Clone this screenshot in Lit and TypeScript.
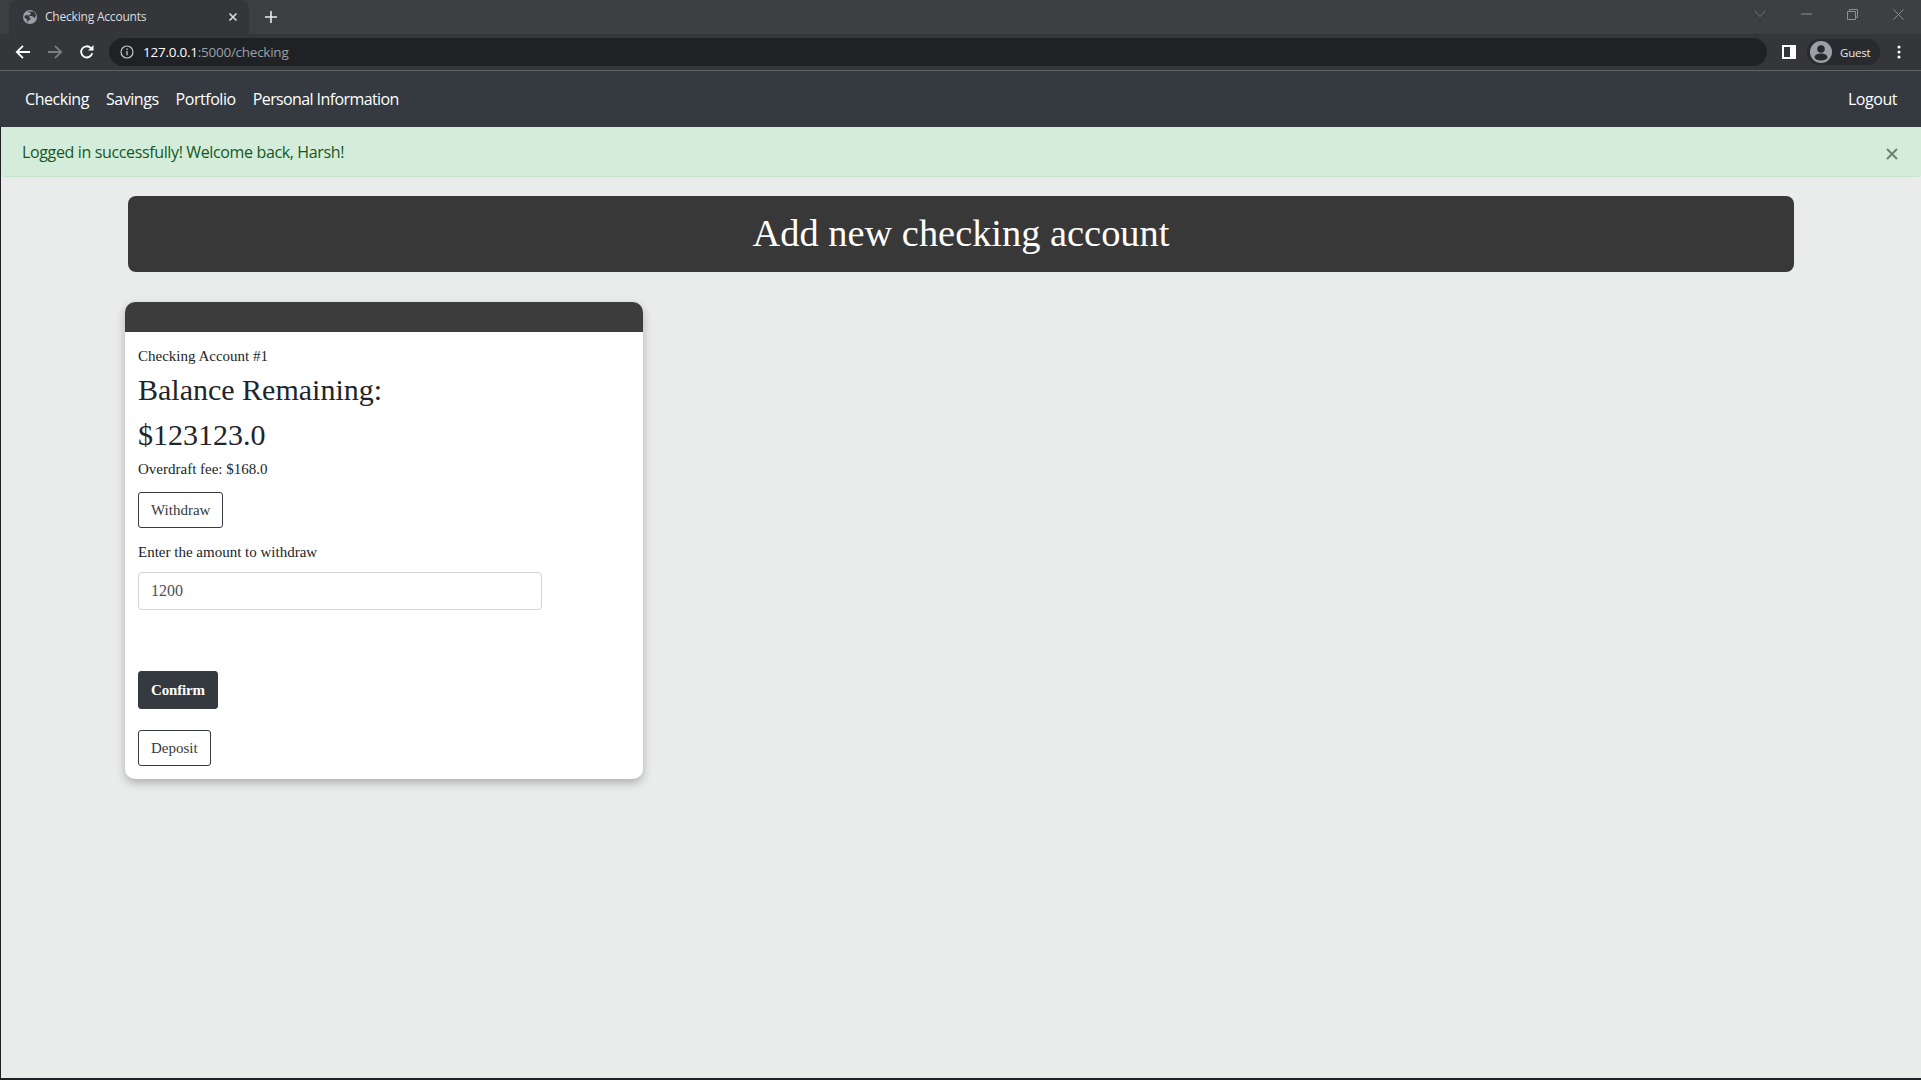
import { LitElement, html, css } from "lit";
import { customElement } from "lit/decorators.js";

@customElement("app-root")
export class AppRoot extends LitElement {
  static styles = css`
    :host { display: flex; flex-direction: column; height: 1080px; width: 1921px; overflow: hidden; background: #202124; font-family: "Liberation Serif", serif; }
    * { box-sizing: border-box; }
    svg { display: block; flex: none; }
    .ui { font-family: "Open Sans", "Noto Sans", sans-serif; }
    .strip { height: 34px; flex: none; background: #3c4043; display: flex; align-items: flex-end; padding-left: 9px; }
    .tab { width: 240px; height: 34px; background: #35363a; border-radius: 8px 8px 0 0; display: flex; align-items: center; padding: 0 11px 0 13px; color: #dcdde0; font-size: 12px; }
    .tab span { margin-left: 7px; flex: 1; letter-spacing: -0.2px; padding-bottom: 2px; }
    .plus { margin-left: 16px; align-self: center; }
    .winctl { margin-left: auto; display: flex; align-items: center; align-self: center; gap: 35px; padding-right: 17px; margin-top: -6px; }
    .toolbar { height: 36px; flex: none; background: #35363a; display: flex; align-items: center; padding-left: 15px; }
    .toolbar .nav { display: flex; gap: 16px; align-items: center; }
    .omni { margin-left: 14px; flex: 1; height: 28px; background: #202124; border-radius: 14px; display: flex; align-items: center; padding-left: 11px; font-size: 13.5px; color: #9aa0a6; }
    .omni b { font-weight: 400; color: #fff; margin-left: 9px; letter-spacing: -0.25px; }
    .omni i { font-style: normal; letter-spacing: -0.25px; }
    .tools { display: flex; align-items: center; padding-left: 15px; padding-right: 20px; }
    .guest { margin-left: 11px; margin-right: 17px; width: 73px; height: 26px; border-radius: 13px; background: #292a2d; display: flex; align-items: center; padding-left: 3px; color: #e8eaed; font-size: 11.5px; gap: 8px; letter-spacing: -0.2px; }
    .divider { height: 1px; flex: none; background: #5f6368; }
    .page { flex: 1; margin-left: 1px; margin-bottom: 2px; background: #eaeceb; display: flex; flex-direction: column; min-height: 0; }
    .navbar { height: 56px; flex: none; background: #343a40; margin-left: -1px; display: flex; align-items: center; padding: 0 24px 0 25px; gap: 17px; font-size: 16px; color: #fff; letter-spacing: -0.45px; }
    .navbar .long { letter-spacing: -0.6px; }
    .navbar .logout { margin-left: auto; }
    .alert { height: 50px; flex: none; background: #d4edda; border-bottom: 1px solid #c3e6cb; border-radius: 0 0 4px 4px; display: flex; align-items: center; justify-content: space-between; padding: 0 23px 0 21px; color: #155724; font-size: 16px; letter-spacing: -0.36px; }
    .alert svg { margin-top: 5px; }
    .content { padding: 19px 0 0 124px; }
    .title { width: 1666px; height: 76px; margin-left: 3px; background: #383838; border-radius: 8px; color: #fff; font-size: 38.4px; display: flex; align-items: center; justify-content: center; padding-bottom: 2px; }
    .card { margin-top: 30px; width: 518px; background: #fff; border-radius: 10px; overflow: hidden; box-shadow: 0 4px 10px rgba(0,0,0,.25); display: flex; flex-direction: column; }
    .card-head { height: 30px; background: #3c3c3c; flex: none; }
    .card-body { padding: 14px 13px 13px; display: flex; flex-direction: column; align-items: flex-start; color: #212529; }
    .small { font-size: 15px; line-height: 21px; }
    .big { font-size: 30px; line-height: 34px; margin-top: 6px; }
    .big.amount { margin-top: 11px; }
    .fee { margin-top: 7px; }
    .btn { font: inherit; font-size: 15px; height: 36px; padding: 0 12px; background: #fff; color: #343a40; border: 1px solid #343a40; border-radius: 3px; display: flex; align-items: center; }
    .btn.withdraw { margin-top: 12px; }
    .label { margin-top: 14px; }
    .input { margin-top: 9px; width: 404px; height: 38px; border: 1px solid #ced4da; border-radius: 4px; padding: 0 12px; display: flex; align-items: center; font-size: 16px; color: #495057; }
    .btn.confirm { margin-top: 61px; height: 38px; background: #343a40; color: #fff; font-weight: 700; letter-spacing: -0.15px; }
    .btn.deposit { margin-top: 21px; }
  `;

  render() {
    return html`
      <div class="strip ui">
        <div class="tab">
          <svg width="16" height="16" viewBox="0 0 16 16"><circle cx="8" cy="8" r="7" fill="#9aa0a6"/><path d="M5 2.5 9 4 7.5 6.5 4 6 2 8l3 2.5.5 3L7 11l2-1-2.5-2.5L10 7l3 2 1-3-2-3.5z" fill="#35363a"/></svg>
          <span>Checking Accounts</span>
          <svg width="10" height="10" viewBox="0 0 10 10"><path d="M1.5 1.5l7 7M8.5 1.5l-7 7" stroke="#dcdde0" stroke-width="1.6"/></svg>
        </div>
        <svg class="plus" width="12" height="12" viewBox="0 0 12 12"><path d="M6 0v12M0 6h12" stroke="#e8eaed" stroke-width="1.6"/></svg>
        <div class="winctl">
          <svg width="12" height="8" viewBox="0 0 12 8"><path d="M1 1l5 5.5L11 1" fill="none" stroke="#70757a" stroke-width="1"/></svg>
          <svg width="11" height="2" viewBox="0 0 11 2"><path d="M0 1h11" stroke="#8b8f93" stroke-width="1"/></svg>
          <svg width="11" height="11" viewBox="0 0 11 11"><path d="M.5 2.5h8v8h-8zM2.5 2.5v-2h8v8h-2" fill="none" stroke="#8b8f93" stroke-width="1"/></svg>
          <svg width="11" height="11" viewBox="0 0 11 11"><path d="M.5.5l10 10M10.5.5l-10 10" stroke="#8b8f93" stroke-width="1"/></svg>
        </div>
      </div>
      <div class="toolbar ui">
        <div class="nav">
          <svg width="16" height="16" viewBox="0 0 16 16"><path d="M15 8H2M8 1.8 1.8 8 8 14.2" fill="none" stroke="#fff" stroke-width="1.8"/></svg>
          <svg width="16" height="16" viewBox="0 0 16 16"><path d="M1 8h13M8 1.8 14.2 8 8 14.2" fill="none" stroke="#7b7e81" stroke-width="1.8"/></svg>
          <svg width="16" height="16" viewBox="0 0 16 16"><path d="M13.2 9.2a5.6 5.6 0 1 1-1.3-5.1" fill="none" stroke="#fff" stroke-width="1.8"/><path d="M14.5 1v5.5H9z" fill="#fff"/></svg>
        </div>
        <div class="omni">
          <svg width="14" height="14" viewBox="0 0 14 14"><circle cx="7" cy="7" r="6" fill="none" stroke="#c4c7ca" stroke-width="1.2"/><path d="M7 6v4.2M7 3.6v1.4" stroke="#c4c7ca" stroke-width="1.3"/></svg>
          <b>127.0.0.1</b><i>:5000/checking</i>
        </div>
        <div class="tools">
          <svg width="14" height="14" viewBox="0 0 14 14"><path fill="#fff" fill-rule="evenodd" d="M0 0h14v14H0zM2 2v10h6V2z"/></svg>
          <div class="guest">
            <svg width="22" height="22" viewBox="0 0 22 22"><circle cx="11" cy="11" r="11" fill="#9aa0a6"/><circle cx="11" cy="8" r="3.8" fill="#292a2d"/><ellipse cx="11" cy="16" rx="6.5" ry="3.6" fill="#292a2d"/></svg>
            <span>Guest</span>
          </div>
          <svg width="4" height="14" viewBox="0 0 4 14"><circle cx="2" cy="2" r="1.5" fill="#fff"/><circle cx="2" cy="7" r="1.5" fill="#fff"/><circle cx="2" cy="12" r="1.5" fill="#fff"/></svg>
        </div>
      </div>
      <div class="divider"></div>
      <div class="page">
        <nav class="navbar ui">
          <span>Checking</span><span>Savings</span><span>Portfolio</span><span class="long">Personal Information</span>
          <span class="logout">Logout</span>
        </nav>
        <div class="alert ui">
          <span>Logged in successfully! Welcome back, Harsh!</span>
          <svg width="12" height="12" viewBox="0 0 12 12"><path d="M1 1l10 10M11 1 1 11" stroke="#6f7f72" stroke-width="2"/></svg>
        </div>
        <div class="content">
          <div class="title">Add new checking account</div>
          <div class="card">
            <div class="card-head"></div>
            <div class="card-body">
              <div class="small">Checking Account #1</div>
              <div class="big">Balance Remaining:</div>
              <div class="big amount">$123123.0</div>
              <div class="small fee">Overdraft fee: $168.0</div>
              <div class="btn withdraw">Withdraw</div>
              <div class="small label">Enter the amount to withdraw</div>
              <div class="input">1200</div>
              <div class="btn confirm">Confirm</div>
              <div class="btn deposit">Deposit</div>
            </div>
          </div>
        </div>
      </div>
    `;
  }
}
